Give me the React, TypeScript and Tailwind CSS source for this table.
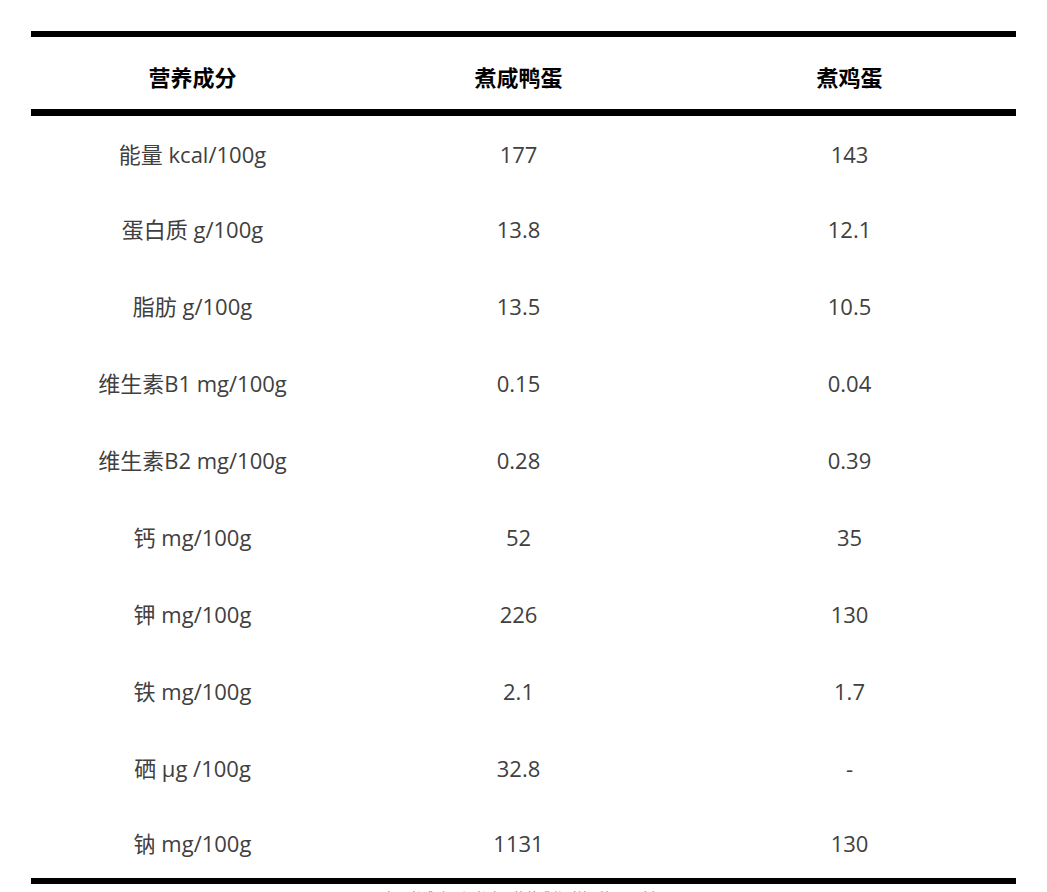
import React from "react";

type Row = { name: string; duck: string; hen: string };

const rows: Row[] = [
  { name: "能量 kcal/100g", duck: "177", hen: "143" },
  { name: "蛋白质 g/100g", duck: "13.8", hen: "12.1" },
  { name: "脂肪 g/100g", duck: "13.5", hen: "10.5" },
  { name: "维生素B1 mg/100g", duck: "0.15", hen: "0.04" },
  { name: "维生素B2 mg/100g", duck: "0.28", hen: "0.39" },
  { name: "钙 mg/100g", duck: "52", hen: "35" },
  { name: "钾 mg/100g", duck: "226", hen: "130" },
  { name: "铁 mg/100g", duck: "2.1", hen: "1.7" },
  { name: "硒 μg /100g", duck: "32.8", hen: "-" },
  { name: "钠 mg/100g", duck: "1131", hen: "130" },
];

export default function App() {
  return (
    <div
      className="bg-white w-[1047px] h-[892px] overflow-hidden px-[31px] pt-[31px]"
      style={{ fontFamily: '"Open Sans", "Noto Sans CJK SC", sans-serif' }}
    >
      <table className="w-full table-fixed border-collapse border-t-[6px] border-b-[6px] border-black">
        <colgroup>
          <col className="w-[323px]" />
          <col className="w-[329px]" />
          <col className="w-[333px]" />
        </colgroup>
        <thead>
          <tr className="border-b-[7px] border-black">
            <th className="h-[78px] pt-[10px] text-[22px] font-bold text-black text-center">营养成分</th>
            <th className="h-[78px] pt-[10px] text-[22px] font-bold text-black text-center">煮咸鸭蛋</th>
            <th className="h-[78px] pt-[10px] text-[22px] font-bold text-black text-center">煮鸡蛋</th>
          </tr>
        </thead>
        <tbody>
          {rows.map((r) => (
            <tr key={r.name}>
              <td className="h-[76.9px] pt-[5px] text-center text-[22px] text-[#404040]">{r.name}</td>
              <td className="h-[76.9px] pt-[5px] text-center text-[22px] text-[#404040]">{r.duck}</td>
              <td className="h-[76.9px] pt-[5px] text-center text-[22px] text-[#404040]">{r.hen}</td>
            </tr>
          ))}
        </tbody>
      </table>
      <p className="mt-[4px] text-center text-[13px] text-[#888888]">
        表：煮咸鸭蛋与煮鸡蛋营养成分对比（每100克）
      </p>
    </div>
  );
}
